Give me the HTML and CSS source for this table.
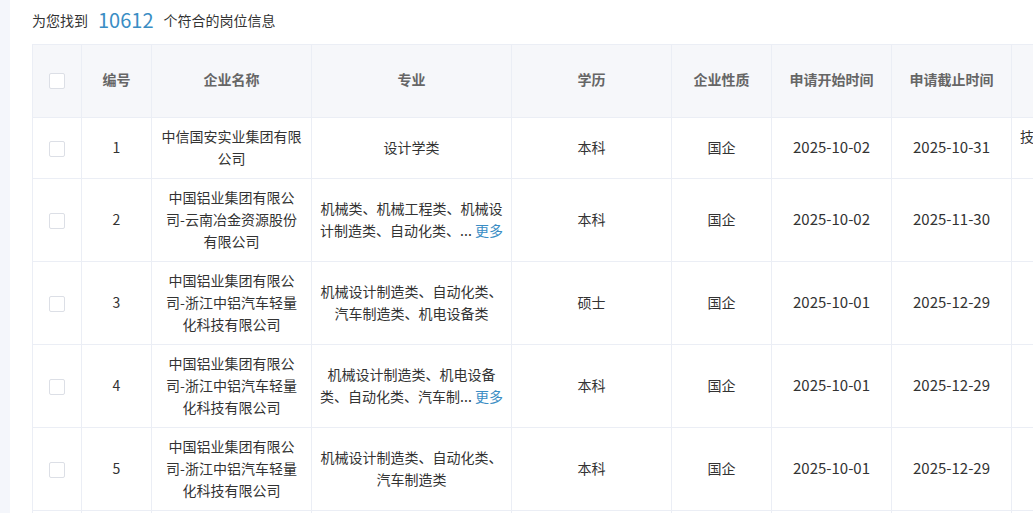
FILE: index.html
```html
<!DOCTYPE html>
<html lang="zh-CN">
<head>
<meta charset="utf-8">
<title>岗位信息</title>
<link rel="stylesheet" href="styles.css">
</head>
<body>
<div class="page">
  <aside class="sidebar"></aside>
  <main class="main">
    <div class="summary">为您找到<span class="count">10612</span>个符合的岗位信息</div>
    <table class="grid">
      <colgroup>
        <col class="c-check"><col class="c-no"><col class="c-name"><col class="c-major"><col class="c-edu"><col class="c-type"><col class="c-date"><col class="c-date"><col class="c-extra">
      </colgroup>
      <thead>
        <tr>
          <th><span class="box"></span></th>
          <th>编号</th>
          <th>企业名称</th>
          <th>专业</th>
          <th>学历</th>
          <th>企业性质</th>
          <th>申请开始时间</th>
          <th>申请截止时间</th>
          <th></th>
        </tr>
      </thead>
      <tbody>
        <tr>
          <td><span class="box"></span></td>
          <td>1</td>
          <td>中信国安实业集团有限公司</td>
          <td class="major">设计学类</td>
          <td>本科</td>
          <td>国企</td>
          <td class="date">2025-10-02</td>
          <td class="date">2025-10-31</td>
          <td class="extra">技术类岗位</td>
        </tr>
        <tr>
          <td><span class="box"></span></td>
          <td>2</td>
          <td>中国铝业集团有限公司-云南冶金资源股份有限公司</td>
          <td class="major">机械类、机械工程类、机械设计制造类、自动化类、... <a class="more" href="#">更多</a></td>
          <td>本科</td>
          <td>国企</td>
          <td class="date">2025-10-02</td>
          <td class="date">2025-11-30</td>
          <td class="extra"></td>
        </tr>
        <tr>
          <td><span class="box"></span></td>
          <td>3</td>
          <td>中国铝业集团有限公司-浙江中铝汽车轻量化科技有限公司</td>
          <td class="major">机械设计制造类、自动化类、汽车制造类、机电设备类</td>
          <td>硕士</td>
          <td>国企</td>
          <td class="date">2025-10-01</td>
          <td class="date">2025-12-29</td>
          <td class="extra"></td>
        </tr>
        <tr>
          <td><span class="box"></span></td>
          <td>4</td>
          <td>中国铝业集团有限公司-浙江中铝汽车轻量化科技有限公司</td>
          <td class="major">机械设计制造类、机电设备类、自动化类、汽车制... <a class="more" href="#">更多</a></td>
          <td>本科</td>
          <td>国企</td>
          <td class="date">2025-10-01</td>
          <td class="date">2025-12-29</td>
          <td class="extra"></td>
        </tr>
        <tr>
          <td><span class="box"></span></td>
          <td>5</td>
          <td>中国铝业集团有限公司-浙江中铝汽车轻量化科技有限公司</td>
          <td class="major">机械设计制造类、自动化类、汽车制造类</td>
          <td>本科</td>
          <td>国企</td>
          <td class="date">2025-10-01</td>
          <td class="date">2025-12-29</td>
          <td class="extra"></td>
        </tr>
        <tr>
          <td><span class="box"></span></td>
          <td>6</td>
          <td>中国铝业集团有限公司</td>
          <td class="major">机械类</td>
          <td>本科</td>
          <td>国企</td>
          <td class="date">2025-10-01</td>
          <td class="date">2025-12-29</td>
          <td class="extra"></td>
        </tr>
      </tbody>
    </table>
  </main>
</div>
</body>
</html>
```

FILE: styles.css
```css
* { box-sizing: border-box; }
html, body { margin: 0; padding: 0; background: #fff; }
body {
  font-family: "Noto Sans CJK SC", "Liberation Sans", sans-serif;
  font-size: 14px;
  color: #333;
}
.page {
  display: flex;
  height: 513px;
  overflow: hidden;
}
.sidebar {
  width: 10px;
  flex: 0 0 10px;
  background: #f4f6fb;
}
.main {
  flex: 1;
  min-width: 0;
  padding: 6px 0 0 22px;
  overflow: hidden;
}
.summary {
  height: 28px;
  line-height: 28px;
  margin-bottom: 10px;
  color: #333;
  white-space: nowrap;
}
.count {
  color: #3a8dc4;
  font-size: 20px;
  margin: 0 10px;
  vertical-align: top;
}
.grid {
  table-layout: fixed;
  border-collapse: separate;
  border-spacing: 0;
  width: 1180px;
  border-top: 1px solid #ebeef5;
  border-left: 1px solid #ebeef5;
}
.c-check { width: 49px; }
.c-no { width: 70px; }
.c-name { width: 160px; }
.c-major { width: 200px; }
.c-edu { width: 160px; }
.c-type { width: 100px; }
.c-date { width: 120px; }
.c-extra { width: 200px; }
.grid th, .grid td {
  border-right: 1px solid #ebeef5;
  border-bottom: 1px solid #ebeef5;
  text-align: center;
  vertical-align: middle;
  padding: 7px 8px 9px;
  line-height: 22px;
}
.grid th {
  height: 73px;
  padding: 6px 8px 10px;
  background: #f6f7fa;
  color: #666;
  font-weight: bold;
}
.grid td.major { padding: 7px 6px 9px; }
.grid td.date { font-size: 15px; }
.grid td.extra {
  text-align: left;
  vertical-align: top;
  white-space: nowrap;
}
.box {
  display: inline-block;
  width: 16px;
  height: 16px;
  border: 1px solid #dcdfe6;
  border-radius: 2px;
  background: #fff;
  vertical-align: middle;
}
.more {
  color: #3a8dc4;
  text-decoration: none;
}
```
